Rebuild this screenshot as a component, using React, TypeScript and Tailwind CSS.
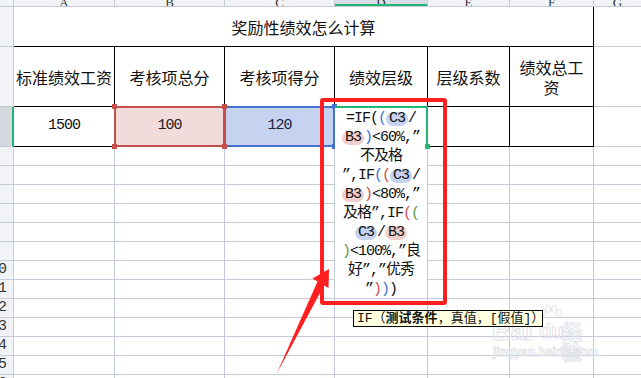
import React from "react";

const G = "border-[#c4cad8]";
const K = "border-black";
const CJK = "font-['Noto_Sans_CJK_SC',sans-serif]";
const MONO = "font-['Liberation_Mono','Noto_Sans_CJK_SC',monospace] tracking-[-1px]";
const HEAD_BG = "bg-[#f2f3f6]";

const BLUE = "text-[#3f6fd4]";
const RED = "text-[#d04f4a]";
const GREEN = "text-[#5e9a44]";

const cols = [
  { key: "A", w: "w-[101px]" },
  { key: "B", w: "w-[110px]" },
  { key: "C", w: "w-[110px]" },
  { key: "D", w: "w-[93px]" },
  { key: "E", w: "w-[82px]" },
  { key: "F", w: "w-[84px]" },
];

const paren = (ch: string, color: string) => <span className={color}>{ch}</span>;

function C3() {
  return <span className="inline-block rounded-full bg-[#c5d3f0] px-[3px] leading-[14px]">C3</span>;
}

function B3() {
  return <span className="inline-block rounded-full bg-[#f0cfcd] px-[3px] leading-[14px]">B3</span>;
}

const formula = [
  <>=IF{paren("(", "")}{paren("(", BLUE)}<C3 />/</>,
  <><B3 />{paren(")", BLUE)}&lt;60%,”</>,
  <>不及格</>,
  <>”,IF{paren("(", BLUE)}{paren("(", RED)}<C3 />/</>,
  <><B3 />{paren(")", RED)}&lt;80%,”</>,
  <>及格”,IF{paren("(", RED)}{paren("(", GREEN)}</>,
  <><C3 />/<B3 /></>,
  <>{paren(")", GREEN)}&lt;100%,”良</>,
  <>好”,”优秀</>,
  <>”{paren(")", RED)}{paren(")", BLUE)})</>,
];

function ColumnHeader() {
  return (
    <div className={`flex h-[7px] shrink-0 overflow-hidden border-b ${G} ${HEAD_BG}`}>
      <div className={`w-[14px] shrink-0 border-r ${G}`} />
      {cols.map((c) => (
        <div
          key={c.key}
          className={`relative ${c.w} shrink-0 flex items-end justify-center border-r ${G} ${c.key === "D" ? "bg-[#d8dce4]" : ""}`}
        >
          <span className="font-['Liberation_Serif',serif] text-[13px] leading-[12px] text-[#333] translate-y-[3px]">{c.key}</span>
          {c.key === "D" && <div className="absolute left-0 right-0 bottom-0 h-[2px] bg-[#22b573]" />}
        </div>
      ))}
      <div className="flex-1 flex items-end justify-center">
        <span className="font-['Liberation_Serif',serif] text-[13px] leading-[12px] text-[#333] translate-y-[3px]">G</span>
      </div>
    </div>
  );
}

function BlankRow({ n }: { n: number }) {
  return (
    <div className="flex h-[19px] shrink-0">
      <div className={`w-[14px] shrink-0 overflow-hidden flex items-center justify-end pr-[7px] border-r border-b ${G} ${HEAD_BG} ${MONO} text-[15px] text-[#333]`}>
        {n >= 10 ? n : ""}
      </div>
      {cols.map((c) => (
        <div key={c.key} className={`${c.w} shrink-0 border-r border-b ${G}`} />
      ))}
      <div className={`flex-1 border-b ${G}`} />
    </div>
  );
}

export default function App() {
  const rows = Array.from({ length: 13 }, (_, i) => i + 4);

  return (
    <div className="relative w-[641px] h-[378px] overflow-hidden bg-white text-[#111]">
      <div className="flex flex-col">
        <ColumnHeader />

        {/* row 1: merged title */}
        <div className="flex h-[40px] shrink-0">
          <div className={`w-[14px] shrink-0 border-r border-b ${G} ${HEAD_BG}`} />
          <div className={`w-[580px] shrink-0 flex items-center justify-center border-r border-b ${K} ${CJK} text-[16px]`}>
            奖励性绩效怎么计算
          </div>
          <div className={`flex-1 border-b ${G}`} />
        </div>

        {/* row 2: headers */}
        <div className="flex h-[60px] shrink-0">
          <div className={`w-[14px] shrink-0 border-r border-b ${G} ${HEAD_BG}`} />
          {["标准绩效工资", "考核项总分", "考核项得分", "绩效层级", "层级系数"].map((t, i) => (
            <div key={t} className={`${cols[i].w} shrink-0 flex items-center justify-center border-r border-b ${K} ${CJK} text-[16px]`}>
              {t}
            </div>
          ))}
          <div className={`w-[84px] shrink-0 flex flex-col items-center justify-center border-r border-b ${K} ${CJK} text-[16px] leading-[20px]`}>
            <span>绩效总工</span>
            <span>资</span>
          </div>
          <div className={`flex-1 border-b ${G}`} />
        </div>

        {/* row 3: values + editing cell */}
        <div className="flex h-[40px] shrink-0">
          <div className={`w-[14px] shrink-0 border-b ${G} bg-[#d4d8df] border-r-2 border-r-[#22b573]`} />
          <div className={`w-[101px] shrink-0 flex items-center justify-center border-r border-b ${K} ${MONO} text-[15px]`}>1500</div>
          <div className={`relative w-[110px] shrink-0 flex items-center justify-center border-r border-b ${K} bg-[#f2dcdb] ${MONO} text-[15px] text-[#2a1a1a]`}>
            100
            <div className="absolute -inset-[1px] z-[3] border-2 border-[#c4504c]">
              <div className="absolute -left-[4px] -top-[4px] w-[5px] h-[5px] bg-[#c4504c]" />
              <div className="absolute -right-[4px] -top-[4px] w-[5px] h-[5px] bg-[#c4504c]" />
              <div className="absolute -left-[4px] -bottom-[4px] w-[5px] h-[5px] bg-[#c4504c]" />
              <div className="absolute -right-[4px] -bottom-[4px] w-[5px] h-[5px] bg-[#c4504c]" />
            </div>
          </div>
          <div className={`relative w-[110px] shrink-0 flex items-center justify-center border-r border-b ${K} bg-[#c5d3f0] ${MONO} text-[15px] text-[#1a2340]`}>
            120
            <div className="absolute -inset-[1px] z-[2] border-2 border-[#4473cf]">
              <div className="absolute -right-[4px] -top-[4px] w-[5px] h-[5px] bg-[#4473cf]" />
              <div className="absolute -right-[4px] -bottom-[4px] w-[5px] h-[5px] bg-[#4473cf]" />
            </div>
          </div>
          <div className={`relative w-[93px] shrink-0 border-r border-b ${K}`}>
            <div className={`absolute left-0 top-0 w-full h-[190px] z-10 bg-white pt-[2px] ${MONO} text-[15px] leading-[19px] text-center`}>
              {formula.map((l, i) => (
                <div key={i} className="h-[19px] whitespace-nowrap">
                  {l}
                </div>
              ))}
            </div>
            <div className="absolute -top-[1px] left-0 -right-[1px] h-[2px] z-[11] bg-[#22b573]" />
            <div className="absolute -top-[1px] -right-[1px] -bottom-[1px] w-[2px] z-[11] bg-[#22b573]" />
            <div className="absolute -right-[3px] -bottom-[3px] w-[5px] h-[5px] z-[11] bg-[#22b573]" />
          </div>
          <div className={`w-[82px] shrink-0 border-r border-b ${K}`} />
          <div className={`w-[84px] shrink-0 border-r border-b ${K}`} />
          <div className={`flex-1 border-b ${G}`} />
        </div>

        {rows.map((n) => (
          <BlankRow key={n} n={n} />
        ))}
      </div>

      {/* function hint */}
      <div className={`absolute left-[353px] top-[310px] z-20 h-[17px] w-[190px] px-[3px] border border-black bg-[#ffffe1] whitespace-nowrap ${MONO} tracking-normal text-[13px] leading-[15px]`}>
        IF（<b>测试条件</b>，真值，[假值]）
      </div>

      {/* annotation */}
      <div className="absolute left-[320px] top-[98px] z-30 w-[127px] h-[207px] rounded-[3px] border-[4px] border-[#ff1f1f]" />
      <svg className="absolute left-0 top-0 z-30 pointer-events-none" width="641" height="378" viewBox="0 0 641 378">
        <polygon
          points="329,269 328.5,288 324,285.5 276.5,374 317.5,281.5 312.5,278.5"
          fill="#ff1f1f"
        />
      </svg>

      {/* watermark */}
      <div className="absolute left-0 top-0 z-10 pointer-events-none select-none">
        <span className="absolute left-[492px] top-[318px] font-['Liberation_Sans',sans-serif] font-bold text-[26px] leading-[26px] text-transparent [-webkit-text-stroke:1px_#dfe2e8]">
          Bai
        </span>
        <svg className="absolute left-[538px] top-[305px]" width="26" height="20" viewBox="0 0 26 20">
          <g fill="none" stroke="#dfe2e8" strokeWidth="1">
            <ellipse cx="5" cy="8" rx="2.5" ry="3.5" />
            <ellipse cx="10" cy="4" rx="2.5" ry="3.5" />
            <ellipse cx="16" cy="4" rx="2.5" ry="3.5" />
            <ellipse cx="21" cy="8" rx="2.5" ry="3.5" />
          </g>
        </svg>
        <span className="absolute left-[539px] top-[321px] font-['Liberation_Sans',sans-serif] font-bold text-[20px] leading-[20px] text-transparent [-webkit-text-stroke:1px_#dfe2e8]">
          du
        </span>
        <span className={`absolute left-[562px] top-[322px] ${CJK} font-bold text-[20px] leading-[20px] text-transparent [-webkit-text-stroke:1px_#dfe2e8]`}>
          经验
        </span>
        <span className="absolute left-[493px] top-[345px] font-['Liberation_Sans',sans-serif] font-bold text-[12px] leading-[14px] text-transparent [-webkit-text-stroke:0.8px_#dfe2e8]">
          jingyan.baidu.com
        </span>
      </div>
    </div>
  );
}
